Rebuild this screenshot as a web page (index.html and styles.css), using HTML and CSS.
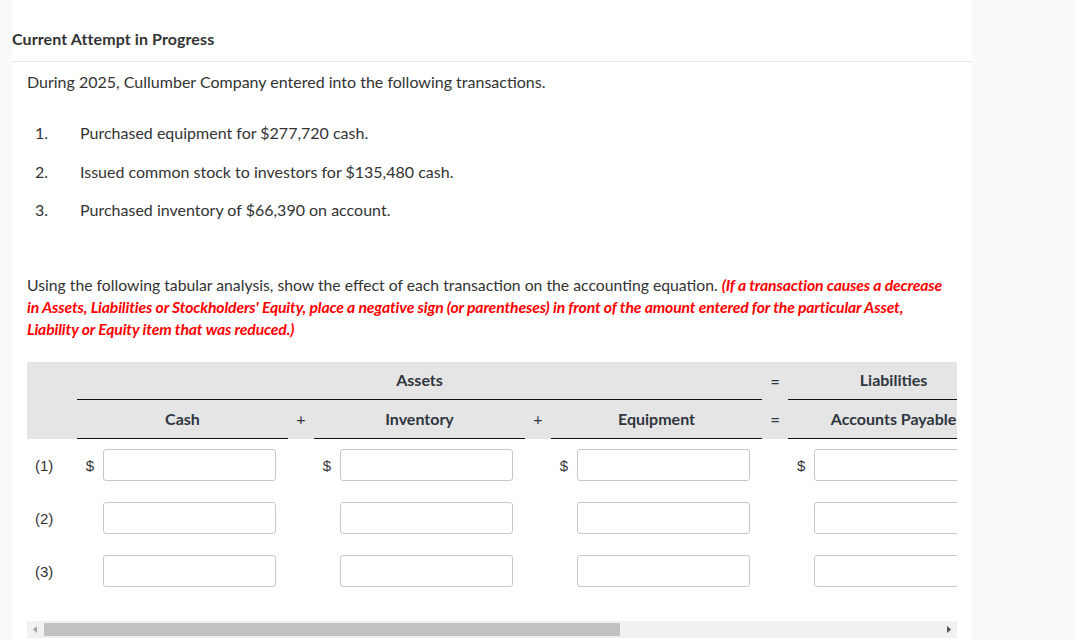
FILE: index.html
```html
<!DOCTYPE html>
<html lang="en">
<head>
    <meta charset="UTF-8">
    <meta name="viewport" content="width=device-width, initial-scale=1.0">
    <title>Current Attempt in Progress</title>
    <link rel="stylesheet" href="styles.css">
</head>
<body>
    <div class="page">
        <!-- En-tete de la tentative -->
        <div class="attempt-header">Current Attempt in Progress</div>

        <div class="question">
            <p class="intro">During 2025, Cullumber Company entered into the following transactions.</p>

            <ol class="transactions">
                <li><span class="num">1.</span>Purchased equipment for $277,720 cash.</li>
                <li><span class="num">2.</span>Issued common stock to investors for $135,480 cash.</li>
                <li><span class="num">3.</span>Purchased inventory of $66,390 on account.</li>
            </ol>

            <p class="instructions">Using the following tabular analysis, show the effect of each transaction on the accounting equation. <em class="warn">(If a transaction causes a decrease in Assets, Liabilities or Stockholders' Equity, place a negative sign (or parentheses) in front of the amount entered for the particular Asset, Liability or Equity item that was reduced.)</em></p>

            <!-- Tableau d'analyse -->
            <div class="table-scroll">
                <table class="analysis">
                    <colgroup>
                        <col class="c-label">
                        <col class="c-val"><col class="c-op">
                        <col class="c-val"><col class="c-op">
                        <col class="c-val"><col class="c-op">
                        <col class="c-val"><col class="c-op">
                        <col class="c-val"><col class="c-op">
                        <col class="c-val">
                    </colgroup>
                    <thead>
                        <tr class="head-top">
                            <th></th>
                            <th class="group" colspan="5">Assets</th>
                            <th class="op eq">=</th>
                            <th class="group">Liabilities</th>
                            <th class="op">+</th>
                            <th class="group" colspan="3">Stockholders' Equity</th>
                        </tr>
                        <tr class="head-sub">
                            <th></th>
                            <th class="item">Cash</th>
                            <th class="op">+</th>
                            <th class="item">Inventory</th>
                            <th class="op">+</th>
                            <th class="item">Equipment</th>
                            <th class="op eq">=</th>
                            <th class="item">Accounts Payable</th>
                            <th class="op">+</th>
                            <th class="item">Common Stock</th>
                            <th class="op">+</th>
                            <th class="item">Retained Earnings</th>
                        </tr>
                    </thead>
                    <tbody>
                        <tr>
                            <td class="label">(1)</td>
                            <td class="val"><span class="cur">$</span><input type="text"></td>
                            <td></td>
                            <td class="val"><span class="cur">$</span><input type="text"></td>
                            <td></td>
                            <td class="val"><span class="cur">$</span><input type="text"></td>
                            <td></td>
                            <td class="val"><span class="cur">$</span><input type="text"></td>
                            <td></td>
                            <td class="val"><span class="cur">$</span><input type="text"></td>
                            <td></td>
                            <td class="val"><span class="cur">$</span><input type="text"></td>
                        </tr>
                        <tr>
                            <td class="label">(2)</td>
                            <td class="val"><span class="cur"></span><input type="text"></td>
                            <td></td>
                            <td class="val"><span class="cur"></span><input type="text"></td>
                            <td></td>
                            <td class="val"><span class="cur"></span><input type="text"></td>
                            <td></td>
                            <td class="val"><span class="cur"></span><input type="text"></td>
                            <td></td>
                            <td class="val"><span class="cur"></span><input type="text"></td>
                            <td></td>
                            <td class="val"><span class="cur"></span><input type="text"></td>
                        </tr>
                        <tr>
                            <td class="label">(3)</td>
                            <td class="val"><span class="cur"></span><input type="text"></td>
                            <td></td>
                            <td class="val"><span class="cur"></span><input type="text"></td>
                            <td></td>
                            <td class="val"><span class="cur"></span><input type="text"></td>
                            <td></td>
                            <td class="val"><span class="cur"></span><input type="text"></td>
                            <td></td>
                            <td class="val"><span class="cur"></span><input type="text"></td>
                            <td></td>
                            <td class="val"><span class="cur"></span><input type="text"></td>
                        </tr>
                    </tbody>
                </table>
            </div>

            <!-- Barre de defilement horizontale -->
            <div class="scrollbar">
                <span class="arrow">
                    <svg width="17" height="17" viewBox="0 0 17 17"><polygon points="10,5 6,8.5 10,12" fill="#a3a3a3"/></svg>
                </span>
                <div class="thumb"></div>
                <span class="arrow arrow-right">
                    <svg width="17" height="17" viewBox="0 0 17 17"><polygon points="7,5 11,8.5 7,12" fill="#505050"/></svg>
                </span>
            </div>
        </div>
    </div>
</body>
</html>
```

FILE: styles.css
```css
body {
    font-family: Lato, "Open Sans", Arial, sans-serif;
    background-color: #fafafa;
    color: #333333;
    margin: 0;
    font-size: 16px;
    overflow: hidden;
}
.page {
    width: 960px;
    min-height: 100vh;
    margin-left: 12px;
    background-color: #ffffff;
}
.attempt-header {
    padding: 28px 0 11px;
    line-height: 22px;
    font-weight: bold;
    letter-spacing: 0.1px;
    border-bottom: 1px solid #e6e6e6;
}
.question {
    padding: 0 15px;
}
.intro {
    margin: 9px 0 0;
    line-height: 22px;
}
.transactions {
    list-style: none;
    margin: 21px 0 0;
    padding: 0;
}
.transactions li {
    display: flex;
    line-height: 22px;
    padding: 8px 0 8.5px;
}
.transactions .num {
    width: 45px;
    padding-left: 8px;
    flex-shrink: 0;
}
.instructions {
    margin: 44px 0 0;
    line-height: 22px;
    font-size: 15.75px;
}
.warn {
    color: #ff0000;
    font-weight: bold;
    letter-spacing: -0.15px;
}
.table-scroll {
    margin-top: 22px;
    width: 930px;
    overflow: hidden;
}
.analysis {
    table-layout: fixed;
    width: 1446px;
    border-collapse: separate;
    border-spacing: 0;
}
.c-label {
    width: 50px;
}
.c-val {
    width: 211px;
}
.c-op {
    width: 26px;
}
.analysis thead th {
    background-color: #e5e5e5;
    padding: 0;
    font-weight: bold;
    text-align: center;
    white-space: nowrap;
    color: #2f3640;
}
.head-top th {
    height: 37px;
    line-height: 36px;
}
.head-sub th {
    height: 38px;
    line-height: 38px;
}
.analysis th.group,
.analysis th.item {
    border-bottom: 1px solid #111111;
}
.analysis th.op {
    font-weight: normal;
}
.analysis th.eq {
    font-weight: bold;
}
.analysis tbody td {
    height: 53px;
    padding: 0;
    vertical-align: middle;
    font-family: "Liberation Sans", Arial, sans-serif;
    font-size: 15px;
}
.analysis td.label {
    padding-left: 8px;
}
.analysis td.val {
    white-space: nowrap;
}
.cur {
    display: inline-block;
    width: 26px;
    text-align: center;
    vertical-align: middle;
}
.analysis input {
    width: 173px;
    height: 32px;
    box-sizing: border-box;
    border: 1px solid #c8c8c8;
    border-radius: 3px;
    padding: 0 6px;
    margin: 0;
    vertical-align: middle;
    font-size: 15px;
    background-color: #ffffff;
}
.scrollbar {
    margin-top: 23px;
    width: 930px;
    height: 17px;
    background-color: #f1f1f1;
    display: flex;
    align-items: center;
}
.arrow {
    width: 17px;
    height: 17px;
    flex-shrink: 0;
}
.arrow svg {
    display: block;
}
.arrow-right {
    margin-left: auto;
}
.thumb {
    width: 576px;
    height: 13px;
    background-color: #c1c1c1;
}
```
